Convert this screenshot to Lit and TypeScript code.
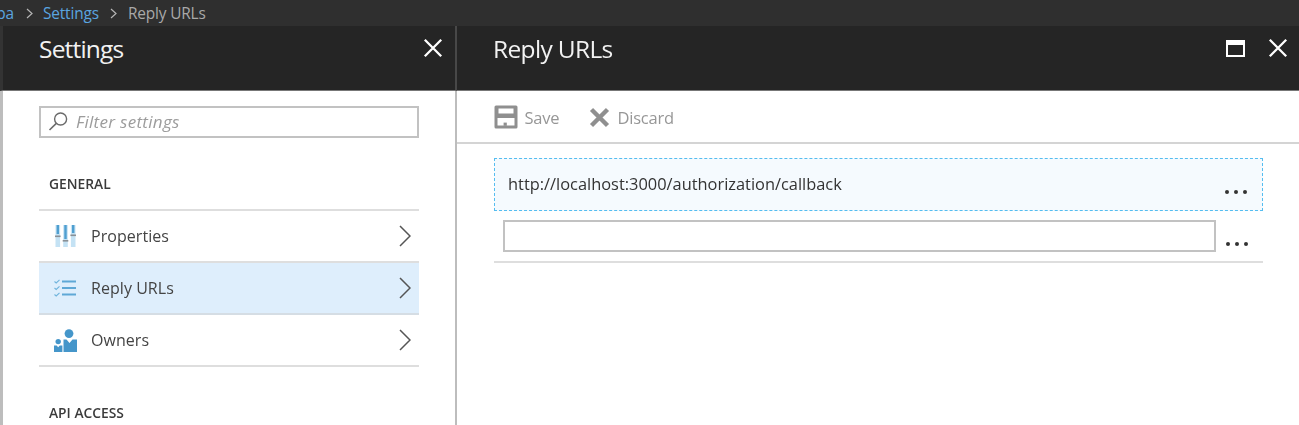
import { LitElement, html, css, svg } from "lit";
import { customElement } from "lit/decorators.js";

const chevron = svg`<svg class="chev" width="12" height="22" viewBox="0 0 12 22"><path d="M1 1 L11 11 L1 21" fill="none" stroke="#555" stroke-width="1.5"/></svg>`;
const closeIcon = svg`<svg width="20" height="20" viewBox="0 0 20 20"><path d="M1.8 1.8 L18.2 18.2 M18.2 1.8 L1.8 18.2" stroke="#fff" stroke-width="2.3" fill="none"/></svg>`;
const dots = html`<span class="dots"><i></i><i></i><i></i></span>`;

const props = svg`<svg width="21" height="22" viewBox="0 0 21 22">
  <rect x="0.5" y="0" width="4.6" height="22" fill="#c4e2f4"/><rect x="8.2" y="0" width="4.6" height="22" fill="#c4e2f4"/><rect x="15.9" y="0" width="4.6" height="22" fill="#c4e2f4"/>
  <rect x="1.6" y="0" width="2.4" height="9" fill="#4f9fd0"/><rect x="9.3" y="0" width="2.4" height="14" fill="#4f9fd0"/><rect x="17" y="0" width="2.4" height="8" fill="#4f9fd0"/>
  <rect x="0" y="10.5" width="5.6" height="1.6" fill="#8a9096"/><rect x="7.7" y="15" width="5.6" height="1.6" fill="#8a9096"/><rect x="15.4" y="9.5" width="5.6" height="1.6" fill="#8a9096"/>
</svg>`;
const list = svg`<svg width="22" height="18" viewBox="0 0 22 18">
  <path d="M8 2.5H22M8 9H22M8 15.5H22" stroke="#5fa8d6" stroke-width="1.8" fill="none"/>
  <path d="M0.5 2.5 L2.2 4 L5.5 0.8M0.5 9 L2.2 10.5 L5.5 7.3M0.5 15.5 L2.2 17 L5.5 13.8" stroke="#6fb3dc" stroke-width="1.1" fill="none"/>
</svg>`;
const owners = svg`<svg width="23" height="23" viewBox="0 0 23 23">
  <circle cx="15" cy="4.6" r="4.4" fill="#4596ca"/>
  <path d="M9.5 10.5 H12.5 L15.5 14 L18.5 10.5 H23 V23 H9.5Z" fill="#4596ca"/>
  <circle cx="4.2" cy="12.6" r="2.7" fill="#4596ca"/>
  <path d="M0 16.5 H2.6 L4.2 18.2 L5.8 16.5 H8.4 V23 H0Z" fill="#4596ca"/>
</svg>`;
const save = svg`<svg width="24" height="24" viewBox="0 0 24 24"><path fill-rule="evenodd" d="M2 0.5 H22 A1.5 1.5 0 0 1 23.5 2 V22 A1.5 1.5 0 0 1 22 23.5 H2 A1.5 1.5 0 0 1 0.5 22 V2 A1.5 1.5 0 0 1 2 0.5Z M4.5 3.5 V8.5 H19.5 V3.5Z M3.5 13 V20.5 H20.5 V13Z" fill="#8f8f8f"/><rect x="9.6" y="17.6" width="3.2" height="3.2" fill="#8f8f8f"/></svg>`;
const discard = svg`<svg width="21" height="21" viewBox="0 0 21 21"><path d="M2.5 2.5 L18.5 18.5 M18.5 2.5 L2.5 18.5" stroke="#8f8f8f" stroke-width="4.4" fill="none"/></svg>`;
const search = svg`<svg width="21" height="21" viewBox="0 0 21 21"><circle cx="12.6" cy="8" r="6" fill="none" stroke="#6a6a6a" stroke-width="1.4"/><path d="M8.3 12.4 L1.5 19" stroke="#6a6a6a" stroke-width="1.6" fill="none"/></svg>`;

@customElement("app-root")
export class AppRoot extends LitElement {
  static styles = css`
    :host { display: block; width: 1299px; height: 425px; overflow: hidden; background: #fff; font-family: "Open Sans", "Noto Sans", sans-serif; color: #3b3b3b; }
    .shell { display: flex; flex-direction: column; height: 425px; filter: blur(0.55px); }
    .crumbs { height: 26px; flex: none; background: #2f2f2f; display: flex; align-items: center; font-size: 15.4px; letter-spacing: -0.15px; white-space: nowrap; overflow: hidden; }
    .crumbs .clip { width: 14px; flex: none; overflow: hidden; direction: rtl; color: #5aa5e0; }
    .crumbs a { color: #5aa5e0; }
    .crumbs span.cur { color: #a9a9a9; }
    .sep { display: flex; margin: 0 10.5px 0 11.5px; flex: none; }
    .main { flex: 1; display: flex; min-height: 0; }
    .blade { display: flex; flex-direction: column; min-width: 0; }
    .one { width: 457px; flex: none; border-left: 3px solid #bdbdbd; border-right: 2px solid #bdbdbd; box-sizing: border-box; }
    .two { flex: 1; }
    .head { flex: none; background: #252525; border-bottom: 1.5px solid #777; display: flex; justify-content: space-between; color: #f2f2f2; font-size: 24.5px; font-weight: 400; }
    .one .head { margin-left: -3px; margin-right: -2px; padding: 6px 12.5px 0 36px; height: 58px; border-left: 3px solid #333; border-right: 2px solid #484848; letter-spacing: -0.8px; }
    .two .head { padding: 6px 11.5px 0 36px; height: 58px; letter-spacing: -0.65px; }
    .head h1 { margin: 0; font: inherit; line-height: 34px; }
    .head .btns { display: flex; gap: 23px; height: 32px; align-items: center; }
    .maxi { width: 15px; height: 10px; border: 2.5px solid #fff; border-top-width: 5px; box-sizing: content-box; display: block; }
    .body1 { padding: 14.5px 36px 0; display: flex; flex-direction: column; }
    .filter { height: 32px; box-sizing: border-box; border: 2px solid #c2c2c2; display: flex; align-items: center; gap: 7px; padding-left: 7px; color: #9c9c9c; font-style: italic; font-size: 17px; letter-spacing: 0.3px; }
    .group { font-size: 13.8px; font-weight: 600; color: #3b3b3b; margin: 0; padding-left: 10px; line-height: 18px; }
    .g1 { margin-top: 37.5px; margin-bottom: 16px; }
    .g2 { margin-top: 36.5px; }
    .rows { border-top: 2px solid #dedede; }
    .row { height: 50px; display: flex; align-items: center; border-bottom: 2px solid #dedede; font-size: 16px; letter-spacing: 0.05px; color: #444; }
    .row.sel { background: #deeefc; border-bottom-color: #d5dde4; }
    .row .ic { width: 52px; flex: none; display: flex; justify-content: center; box-sizing: border-box; }
    .row .ic svg { display: block; }
    .row .lbl { flex: 1; }
    .chev { margin-right: 8px; display: block; }
    .tools { height: 49px; padding-top: 1.5px; flex: none; border-bottom: 2px solid #d4d4d4; display: flex; align-items: center; padding-left: 36.5px; color: #979797; font-size: 16.5px; letter-spacing: -0.2px; }
    .tool { display: flex; align-items: center; gap: 7px; }
    .tool + .tool { margin-left: 30px; }
    .tool svg { display: block; }
    .body2 { padding: 14px 36px 0 37px; display: flex; flex-direction: column; }
    .url { height: 53px; box-sizing: border-box; border: 1.8px dashed #55bdf0; background: #f5fafe; display: flex; align-items: center; padding: 0 0 1px 13px; font-size: 16.4px; color: #333; position: relative; }
    .url .dots { position: absolute; right: 15px; top: 31.5px; }
    .line2 { height: 52px; box-sizing: border-box; border-bottom: 2px solid #dedede; padding: 9px 0 0 9px; display: flex; gap: 9.5px; align-items: flex-start; }
    .box { width: 713px; height: 32.5px; box-sizing: border-box; border: 2px solid #c2c2c2; flex: none; }
    .dots { display: flex; gap: 5px; }
    .line2 .dots { margin-top: 22px; }
    .dots i { width: 4px; height: 4px; border-radius: 50%; background: #333; display: block; }
  `;

  render() {
    const sep = html`<svg class="sep" width="7" height="11" viewBox="0 0 7 11"><path d="M1 1 L6 5.5 L1 10" fill="none" stroke="#b5b5b5" stroke-width="1.2"/></svg>`;
    return html`<div class="shell">
      <nav class="crumbs">
        <span class="clip">pa</span>${sep}<a>Settings</a>${sep}<span class="cur">Reply URLs</span>
      </nav>
      <div class="main">
        <section class="blade one">
          <header class="head"><h1>Settings</h1><div class="btns">${closeIcon}</div></header>
          <div class="body1">
            <div class="filter">${search}<span>Filter settings</span></div>
            <h2 class="group g1">GENERAL</h2>
            <div class="rows">
              <div class="row"><span class="ic">${props}</span><span class="lbl">Properties</span>${chevron}</div>
              <div class="row sel"><span class="ic">${list}</span><span class="lbl">Reply URLs</span>${chevron}</div>
              <div class="row"><span class="ic">${owners}</span><span class="lbl">Owners</span>${chevron}</div>
            </div>
            <h2 class="group g2">API ACCESS</h2>
          </div>
        </section>
        <section class="blade two">
          <header class="head"><h1>Reply URLs</h1><div class="btns"><span class="maxi"></span>${closeIcon}</div></header>
          <div class="tools">
            <span class="tool">${save}<span>Save</span></span>
            <span class="tool">${discard}<span>Discard</span></span>
          </div>
          <div class="body2">
            <div class="url">http://localhost:3000/authorization/callback${dots}</div>
            <div class="line2"><div class="box"></div>${dots}</div>
          </div>
        </section>
      </div>
    </div>`;
  }
}
